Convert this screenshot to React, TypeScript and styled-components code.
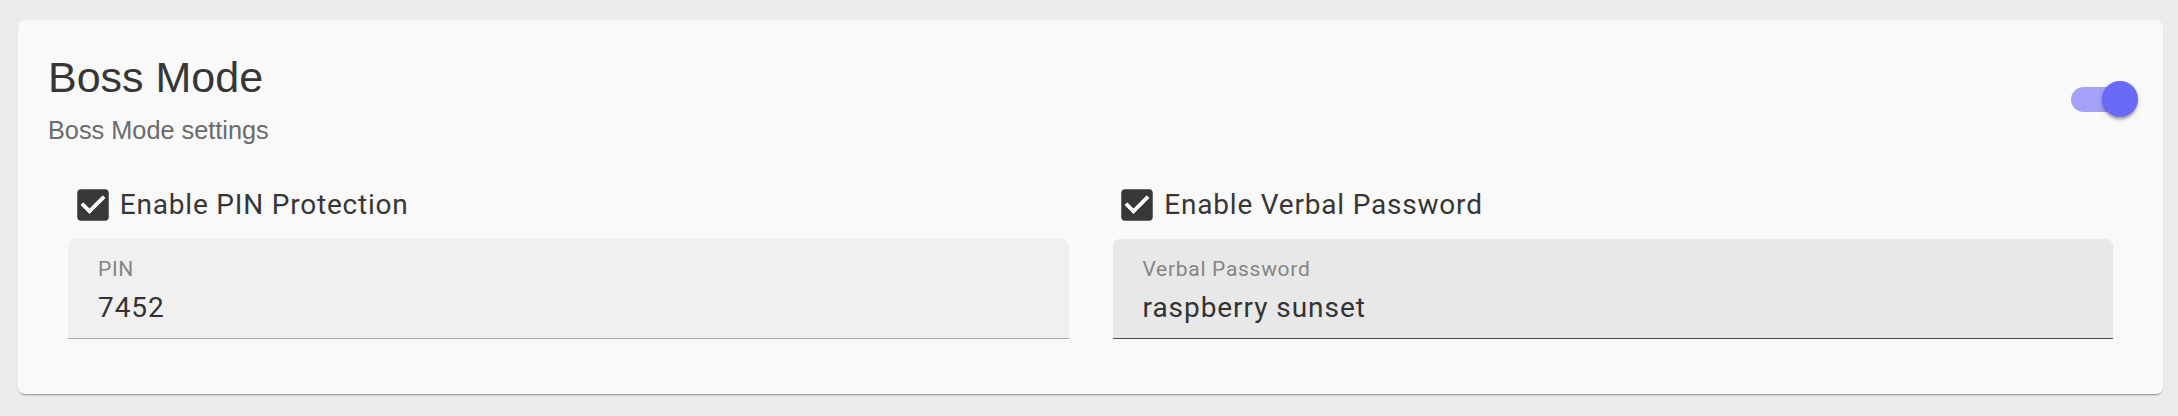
import { FC } from "react";
import styled, { createGlobalStyle } from "styled-components";

const GlobalStyle = createGlobalStyle`
  html, body {
    margin: 0;
    padding: 0;
    background: #ececec;
  }
`;

const Page = styled.div`
  padding: 20px 15px 21px 18px;
  background: #ececec;
`;

const Card = styled.section`
  background: #f9f9f9;
  border-radius: 7px;
  box-shadow: 0 3px 2px -2px rgba(0, 0, 0, 0.35), 0 1px 2px rgba(0, 0, 0, 0.1);
  padding: 31.5px 25px 55px 30px;
`;

const Header = styled.div`
  display: flex;
  justify-content: space-between;
  align-items: flex-start;
`;

const Title = styled.h2`
  margin: 0;
  font-family: "Liberation Sans", Arial, sans-serif;
  font-weight: 400;
  font-size: 43px;
  line-height: 50.4px;
  color: #363636;
`;

const Subtitle = styled.p`
  margin: 11px 0 0;
  font-family: "Liberation Sans", Arial, sans-serif;
  font-size: 25.3px;
  line-height: 35px;
  color: #6b6b6b;
`;

const SwitchRoot = styled.div`
  position: relative;
  width: 67px;
  height: 36px;
  margin-top: 29.5px;
`;

const Track = styled.div`
  position: absolute;
  left: 0;
  top: 5.5px;
  width: 60px;
  height: 25px;
  border-radius: 12.5px;
  background: #a5a2f7;
`;

const Thumb = styled.div`
  position: absolute;
  right: 0;
  top: 0;
  width: 36px;
  height: 36px;
  border-radius: 50%;
  background: #6a69f8;
  box-shadow: 0 3px 3px -1px rgba(0, 0, 0, 0.2), 0 2px 3px rgba(0, 0, 0, 0.14),
    0 2px 6px rgba(0, 0, 0, 0.12);
`;

const Grid = styled.div`
  display: grid;
  grid-template-columns: 1fr 1fr;
  column-gap: 44px;
  padding: 0 25px 0 20px;
  margin-top: 35.7px;
`;

const Column = styled.div`
  display: flex;
  flex-direction: column;
  gap: 13.7px;
`;

const CheckRow = styled.label`
  display: flex;
  align-items: center;
  gap: 6px;
  height: 42px;
  padding-left: 3.75px;
  font-family: Roboto, "Liberation Sans", sans-serif;
  font-size: 28px;
  line-height: 42px;
  letter-spacing: 0.8px;
  color: #363636;
`;

const Field = styled.div<{ active?: boolean }>`
  background: ${(p) => (p.active ? "#e8e8e8" : "#f0f0f0")};
  border-radius: 7px 7px 0 0;
  border-bottom: 1px solid ${(p) => (p.active ? "#4a4a4a" : "#a9a9a9")};
  padding: 18px 30px 13.7px;
  font-family: Roboto, "Liberation Sans", sans-serif;
`;

const FieldLabel = styled.div`
  font-size: 21px;
  line-height: 25.2px;
  letter-spacing: 0.7px;
  color: #858585;
`;

const FieldValue = styled.div`
  margin-top: 8.5px;
  font-size: 28px;
  line-height: 33.6px;
  letter-spacing: 0.95px;
  color: #333;
`;

const CheckIcon: FC = () => (
  <svg width="42" height="42" viewBox="0 0 24 24" aria-hidden>
    <path
      fill="#383838"
      d="M19 3H5c-1.11 0-2 .9-2 2v14c0 1.1.89 2 2 2h14c1.11 0 2-.9 2-2V5c0-1.1-.89-2-2-2zm-9 14l-5-5 1.41-1.41L10 14.17l7.59-7.59L19 8l-9 9z"
    />
    <path fill="#fff" d="M10 17l-5-5 1.41-1.41L10 14.17l7.59-7.59L19 8l-9 9z" />
  </svg>
);

const SettingField: FC<{ check: string; label: string; value: string; active?: boolean }> = ({
  check,
  label,
  value,
  active,
}) => (
  <Column>
    <CheckRow>
      <CheckIcon />
      {check}
    </CheckRow>
    <Field active={active}>
      <FieldLabel>{label}</FieldLabel>
      <FieldValue>{value}</FieldValue>
    </Field>
  </Column>
);

const App: FC = () => {
  return (
    <Page>
      <GlobalStyle />
      <Card>
        <Header>
          <div>
            <Title>Boss Mode</Title>
            <Subtitle>Boss Mode settings</Subtitle>
          </div>
          <SwitchRoot>
            <Track />
            <Thumb />
          </SwitchRoot>
        </Header>
        <Grid>
          <SettingField check="Enable PIN Protection" label="PIN" value="7452" />
          <SettingField
            check="Enable Verbal Password"
            label="Verbal Password"
            value="raspberry sunset"
            active
          />
        </Grid>
      </Card>
    </Page>
  );
};

export default App;
